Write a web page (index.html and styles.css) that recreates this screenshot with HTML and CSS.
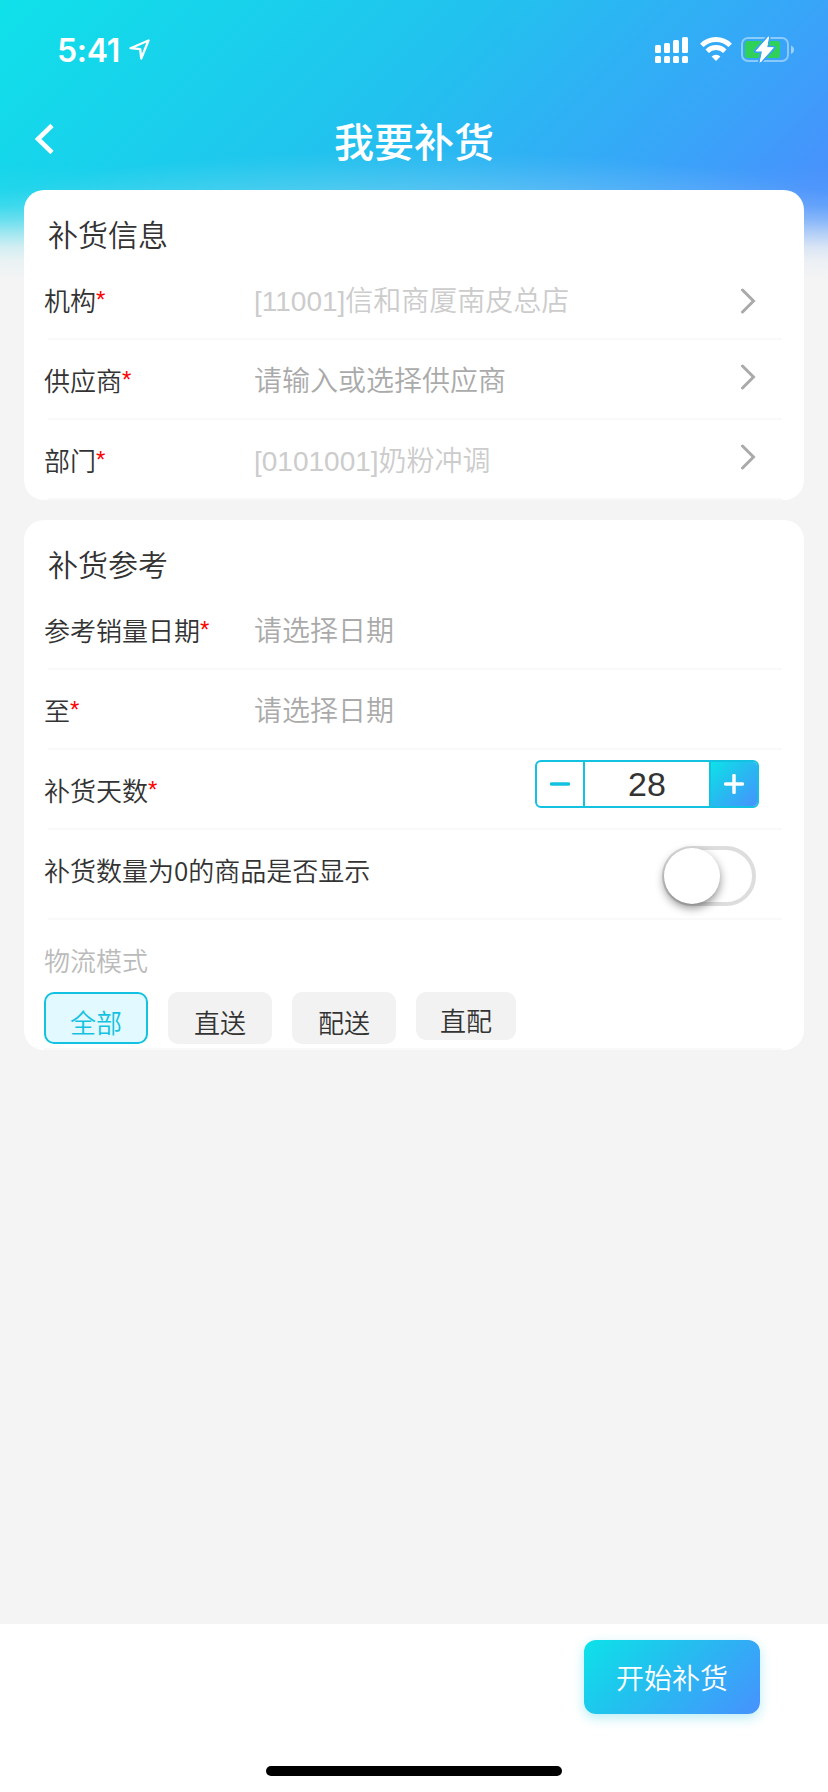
FILE: index.html
```html
<!DOCTYPE html>
<html lang="zh-CN">
<head>
<meta charset="utf-8">
<title>我要补货</title>
<link rel="stylesheet" href="styles.css">
</head>
<body>
<div class="screen">
  <header class="hero">
    <div class="status">
      <div class="clock">5:41
        <svg class="locate" width="22" height="22" viewBox="0 0 22 22"><path d="M1.5 9.2 19.5 1.5 12.2 19.5 11.2 10.2Z" fill="none" stroke="#fff" stroke-width="2.3" stroke-linejoin="round"/></svg>
      </div>
      <div class="indicators">
        <svg width="34" height="26" viewBox="0 0 34 26" fill="#fff"><rect x="0" y="8" width="6" height="8" rx="1.5"/><rect x="9" y="6" width="6" height="10" rx="1.5"/><rect x="18" y="3" width="6" height="13" rx="1.5"/><rect x="27" y="0" width="6" height="16" rx="1.5"/><rect x="0" y="19" width="6" height="7" rx="1.5"/><rect x="9" y="19" width="6" height="7" rx="1.5"/><rect x="18" y="19" width="6" height="7" rx="1.5"/><rect x="27" y="19" width="6" height="7" rx="1.5"/></svg>
        <svg width="32" height="24" viewBox="0 0 32 24"><g fill="none" stroke="#fff" stroke-width="4.8"><path d="M1.800 8.400a20 20 0 0 1 28.400 0"/><path d="M7.200 14.200a12.300 12.300 0 0 1 17.600 0"/></g><path d="M11.600 19.400a6.400 6.400 0 0 1 8.800 0L16 24Z" fill="#fff"/></svg>
        <svg width="54" height="28" viewBox="0 0 54 28"><rect x="1" y="2" width="46" height="23" rx="6" fill="none" stroke="#fff" stroke-opacity=".42" stroke-width="2"/><path d="M50 9.500q3 1.200 3 4.200t-3 4.200Z" fill="#fff" fill-opacity=".5"/><rect x="4" y="5" width="35" height="17" rx="2.500" fill="#2fd158"/><path d="M28 0 14.500 15.200H21L18.500 27 33 11.500H26Z" fill="#fff" stroke="#38a4f6" stroke-width="3.600" stroke-linejoin="round" paint-order="stroke"/><path d="M27.500 1 15.500 14.800H22L19.500 26 32 11.800H25.500Z" fill="#fff" stroke="#fff" stroke-width="1" stroke-linejoin="round"/></svg>
      </div>
    </div>
    <div class="navbar">
      <svg class="back" width="20" height="32" viewBox="0 0 20 32"><path d="M17 2.500 3 16 17 29.500" fill="none" stroke="#fff" stroke-width="4.600"/></svg>
      <h1 class="title">我要补货</h1>
    </div>
  </header>

  <main class="content">
    <section class="card">
      <h2 class="card-title">补货信息</h2>
      <div class="row">
        <span class="label">机构<i>*</i></span><span class="value locked">[11001]信和商厦南皮总店</span>
        <svg class="chevron low" width="16" height="26" viewBox="0 0 16 26"><path d="M2.500 2 13.500 13 2.500 24"/></svg>
      </div>
      <div class="row">
        <span class="label">供应商<i>*</i></span><span class="value">请输入或选择供应商</span>
        <svg class="chevron" width="16" height="26" viewBox="0 0 16 26"><path d="M2.500 2 13.500 13 2.500 24"/></svg>
      </div>
      <div class="row">
        <span class="label">部门<i>*</i></span><span class="value locked">[0101001]奶粉冲调</span>
        <svg class="chevron" width="16" height="26" viewBox="0 0 16 26"><path d="M2.500 2 13.500 13 2.500 24"/></svg>
      </div>
    </section>

    <section class="card">
      <h2 class="card-title">补货参考</h2>
      <div class="row"><span class="label">参考销量日期<i>*</i></span><span class="value">请选择日期</span></div>
      <div class="row"><span class="label">至<i>*</i></span><span class="value">请选择日期</span></div>
      <div class="row">
        <span class="label">补货天数<i>*</i></span>
        <div class="stepper">
          <div class="step minus"><svg width="20" height="20" viewBox="0 0 20 20"><path d="M1.500 10h17"/></svg></div>
          <div class="count">28</div>
          <div class="step plus"><svg width="20" height="20" viewBox="0 0 20 20"><path d="M1.500 10h17M10 1.500v17"/></svg></div>
        </div>
      </div>
      <div class="row tall">
        <span class="label wide">补货数量为0的商品是否显示</span>
        <div class="toggle"><div class="knob"></div></div>
      </div>
      <div class="mode">
        <div class="mode-label">物流模式</div>
        <div class="chips">
          <div class="chip active">全部</div>
          <div class="chip">直送</div>
          <div class="chip">配送</div>
          <div class="chip short">直配</div>
        </div>
      </div>
    </section>
  </main>

  <footer class="footer">
    <div class="submit">开始补货</div>
    <div class="home"></div>
  </footer>
</div>
</body>
</html>
```
FILE: styles.css
```css
* { box-sizing: border-box; }
body {
  margin: 0;
  font-family: "Liberation Sans", "Noto Sans CJK SC", sans-serif;
  font-weight: 350;
  color: #333;
}
h1, h2 { margin: 0; }
svg { display: block; flex: none; }
.screen {
  width: 828px;
  height: 1792px;
  display: flex;
  flex-direction: column;
  background: #f4f4f4;
  overflow: hidden;
}
.hero {
  height: 280px;
  margin-bottom: -90px;
  flex: none;
  background:
    radial-gradient(ellipse 460px 75px at 50% 225px, rgba(244,244,244,.3), rgba(244,244,244,0)),
    linear-gradient(to bottom, rgba(244,244,244,0) 165px, rgba(244,244,244,.05) 190px, rgba(244,244,244,.15) 206px, rgba(244,244,244,.35) 220px, rgba(244,244,244,.62) 234px, rgba(244,244,244,.84) 247px, rgba(244,244,244,.95) 260px, #f4f4f4 280px),
    linear-gradient(135deg, #0fe1e9 0%, #22c1ee 45%, #37a6f8 73%, #4792fc 90%);
}
.status {
  height: 100px;
  padding: 0 33px 0 57px;
  display: flex;
  justify-content: space-between;
}
.clock {
  display: flex;
  align-items: flex-start;
  gap: 9px;
  padding-top: 30px;
  font: 600 32px/41px Inter, sans-serif;
  letter-spacing: -.3px;
  color: #fff;
}
.locate { margin-top: 9px; }
.indicators {
  display: flex;
  align-items: flex-start;
  padding-top: 36px;
}
.indicators svg:first-child { margin: 1px 11px 0 0; }
.indicators svg:nth-child(2) { margin: 1px 9px 0 0; }
.navbar {
  height: 90px;
  display: grid;
  grid-template-columns: 88px 1fr 88px;
}
.back { margin: 23px 0 0 35px; }
.title {
  text-align: center;
  font: 500 40px/60px "Noto Sans CJK SC", sans-serif;
  color: #fff;
  padding-top: 10px;
}
.content {
  flex: 1;
  padding: 0 24px;
  display: flex;
  flex-direction: column;
  gap: 20px;
}
.card {
  background: #fff;
  border-radius: 20px;
  padding: 0 22px 0 24px;
}
.card-title {
  height: 70px;
  font: 350 30px/86px "Noto Sans CJK SC", sans-serif;
}
.row {
  height: 80px;
  display: flex;
  align-items: flex-start;
  border-bottom: 2px solid #f9f9f9;
}
.row.tall { height: 90px; }
.label {
  width: 210px;
  margin-left: -4px;
  font: 350 26px/80px "Noto Sans CJK SC", sans-serif;
  white-space: nowrap;
}
.label i {
  font: 400 24px/24px "Liberation Sans", sans-serif;
  vertical-align: 3px;
  color: #f00;
}
.label.wide { width: 400px; }
.value {
  flex: 1;
  font-size: 28px;
  line-height: 84px;
  color: #aaa;
  white-space: nowrap;
}
.value.locked { color: #ccc; }
.chevron {
  margin: 24px 26px 0 0;
  fill: none;
  stroke: #aaa;
  stroke-width: 3;
  stroke-linecap: round;
}
.chevron.low { margin-top: 28px; }
.stepper {
  width: 224px;
  height: 48px;
  margin: 10px 23px 0 auto;
  display: flex;
  border: 2px solid #13c2e0;
  border-radius: 6px;
  overflow: hidden;
}
.step {
  width: 46px;
  display: flex;
  align-items: center;
  justify-content: center;
  fill: none;
  stroke-width: 3.500;
  stroke-linecap: round;
}
.minus { stroke: #13c2e0; }
.plus {
  stroke: #fff;
  background: linear-gradient(135deg, #0de2e9, #22c1ee 40%, #37a6f8 74%, #4792fc);
}
.count {
  flex: 1;
  border: solid #13c2e0;
  border-width: 0 2px;
  text-align: center;
  font-size: 34px;
  line-height: 44px;
}
.toggle {
  width: 94px;
  height: 60px;
  margin: 16px 26px 0 auto;
  border: 4px solid #ddd;
  border-radius: 30px;
}
.knob {
  width: 56px;
  height: 56px;
  margin: -2px;
  border-radius: 50%;
  background: #fff;
  box-shadow: 0 4px 10px rgba(0,0,0,.45);
}
.mode {
  height: 130px;
  margin-left: -4px;
  border-bottom: 2px solid #f9f9f9;
}
.mode-label {
  height: 72px;
  font: 350 26px/80px "Noto Sans CJK SC", sans-serif;
  color: #bbb;
}
.chips { display: flex; gap: 20px; }
.chip {
  width: 104px;
  height: 52px;
  border: 2px solid #f2f2f2;
  border-radius: 10px;
  background: #f2f2f2;
  text-align: center;
  font: 350 26px/56px "Noto Sans CJK SC", sans-serif;
}
.chip.active {
  color: #13c2e0;
  border-color: #13c2e0;
  background: #e1f9ff;
}
.chip.short { width: 100px; height: 48px; line-height: 52px; }
.footer {
  height: 168px;
  flex: none;
  background: #fff;
  display: flex;
  flex-direction: column;
  align-items: center;
  padding: 16px 0;
  justify-content: space-between;
}
.submit {
  align-self: flex-end;
  width: 176px;
  height: 74px;
  margin-right: 68px;
  border-radius: 12px;
  background: linear-gradient(135deg, #0de2e9, #22c1ee 40%, #37a6f8 74%, #4792fc);
  box-shadow: 0 4px 12px rgba(19,194,224,.3);
  color: #fff;
  text-align: center;
  font-size: 28px;
  line-height: 80px;
}
.home {
  width: 296px;
  height: 10px;
  border-radius: 5px;
  background: #000;
}
```
